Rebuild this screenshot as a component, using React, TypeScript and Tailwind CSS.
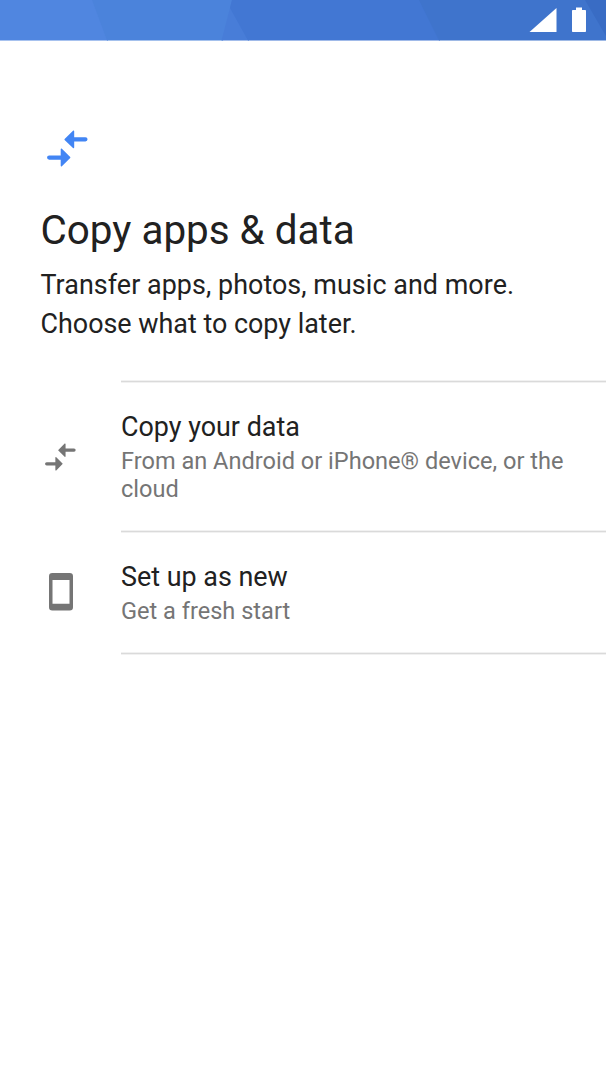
// Setup wizard screen: choose between copying existing data or starting fresh

import type { ReactNode } from "react";

function StatusBar() {
  return (
    <header className="h-[41px] shrink-0">
      <svg className="block h-[41px] w-full" viewBox="0 0 606 41" preserveAspectRatio="none">
        {/* Faceted wallpaper, each facet overlaps the one before it */}
        <path fill="#5086e0" d="M0 0h108v40.4H0z" />
        <path fill="#4b83db" d="M92 0h141l-10 40.4H107z" />
        <path fill="#487dd8" d="M232 0h3l14 40.4h-27.5L230 8z" />
        <path fill="#4277d3" d="M232 0h188l20 40.4H248L230 8z" />
        <path fill="#3f74cc" d="M419 0h187v40.4H439z" />
        <path fill="#396cc4" d="M585 0h21v36z" />
        {/* Signal and battery */}
        <path fill="#fff" d="M556.5 8v24h-27z" />
        <path fill="#fff" d="M576 7.5h6V10h3c.6 0 1 .4 1 1v20c0 .6-.4 1-1 1h-12c-.6 0-1-.4-1-1V11c0-.6.4-1 1-1h3z" />
      </svg>
    </header>
  );
}

function TransferIcon({ className }: { className: string }) {
  return (
    <svg className={className} viewBox="0 0 41 37" fill="currentColor">
      <path d="M17.6 9.1 26 .8c.5-.5 1.2-.2 1.2.5v5.9h11.2a2.15 2.15 0 0 1 0 4.3H27.2v6.1c0 .7-.7 1-1.2.5L17.6 9.9a.6.6 0 0 1 0-.8z" />
      <path d="M23.2 27.1 14.9 18.8c-.5-.5-1.2-.2-1.2.5v6.1H2.2a2.15 2.15 0 0 0 0 4.3h11.5v6c0 .7.7 1 1.2.5l8.3-8.3a.6.6 0 0 0 0-.8z" />
    </svg>
  );
}

function PhoneIcon() {
  return (
    <svg className="mb-px ml-1 h-[38px] w-6" viewBox="0 0 24 38">
      <path fill="#757575" fillRule="evenodd" d="M3.3 0h17.4A3.3 3.3 0 0 1 24 3.3v31a3.3 3.3 0 0 1-3.3 3.3H3.3A3.3 3.3 0 0 1 0 34.3v-31A3.3 3.3 0 0 1 3.3 0zm.2 6.9v23.8h17V6.9z" />
    </svg>
  );
}

function Divider() {
  return <div className="ml-[121px] h-[3px] border-y border-[#f1f1f1] bg-[#dadada]" />;
}

interface OptionProps {
  icon: ReactNode;
  title: string;
  description: string;
}

function Option({ icon, title, description }: OptionProps) {
  return (
    <button className="flex w-full items-center text-left">
      <span className="flex w-[121px] shrink-0 pl-[45px]">{icon}</span>
      <span className="flex flex-1 flex-col pt-7 pr-8 pb-[27px]">
        <span className="text-[26.9px] leading-8 text-[#212121]">{title}</span>
        <span className="mt-1 text-[23.57px] leading-7 text-[#757575]">{description}</span>
      </span>
    </button>
  );
}

export default function App() {
  return (
    <div className="flex min-h-screen flex-col bg-white font-['Roboto',sans-serif]">
      <StatusBar />

      <main>
        {/* Heading */}
        <section className="pt-[89px] pr-8 pl-[40.5px]">
          <TransferIcon className="ml-1.5 h-[37px] w-[41px] text-[#4285f4]" />
          <h1 className="mt-10 text-[40.4px] leading-12 text-[#212121]">Copy apps &amp; data</h1>
          <p className="mt-[11px] text-[26.9px] leading-[39px] text-[#212121]">
            <span className="block tracking-[0.05px]">Transfer apps, photos, music and more.</span>
            Choose what to copy later.
          </p>
        </section>

        {/* Options */}
        <div className="pt-9">
          <Divider />
          <Option
            icon={<TransferIcon className="h-7 w-[31px] text-[#757575]" />}
            title="Copy your data"
            description="From an Android or iPhone® device, or the cloud"
          />
          <Divider />
          <Option icon={<PhoneIcon />} title="Set up as new" description="Get a fresh start" />
          <Divider />
        </div>
      </main>
    </div>
  );
}
